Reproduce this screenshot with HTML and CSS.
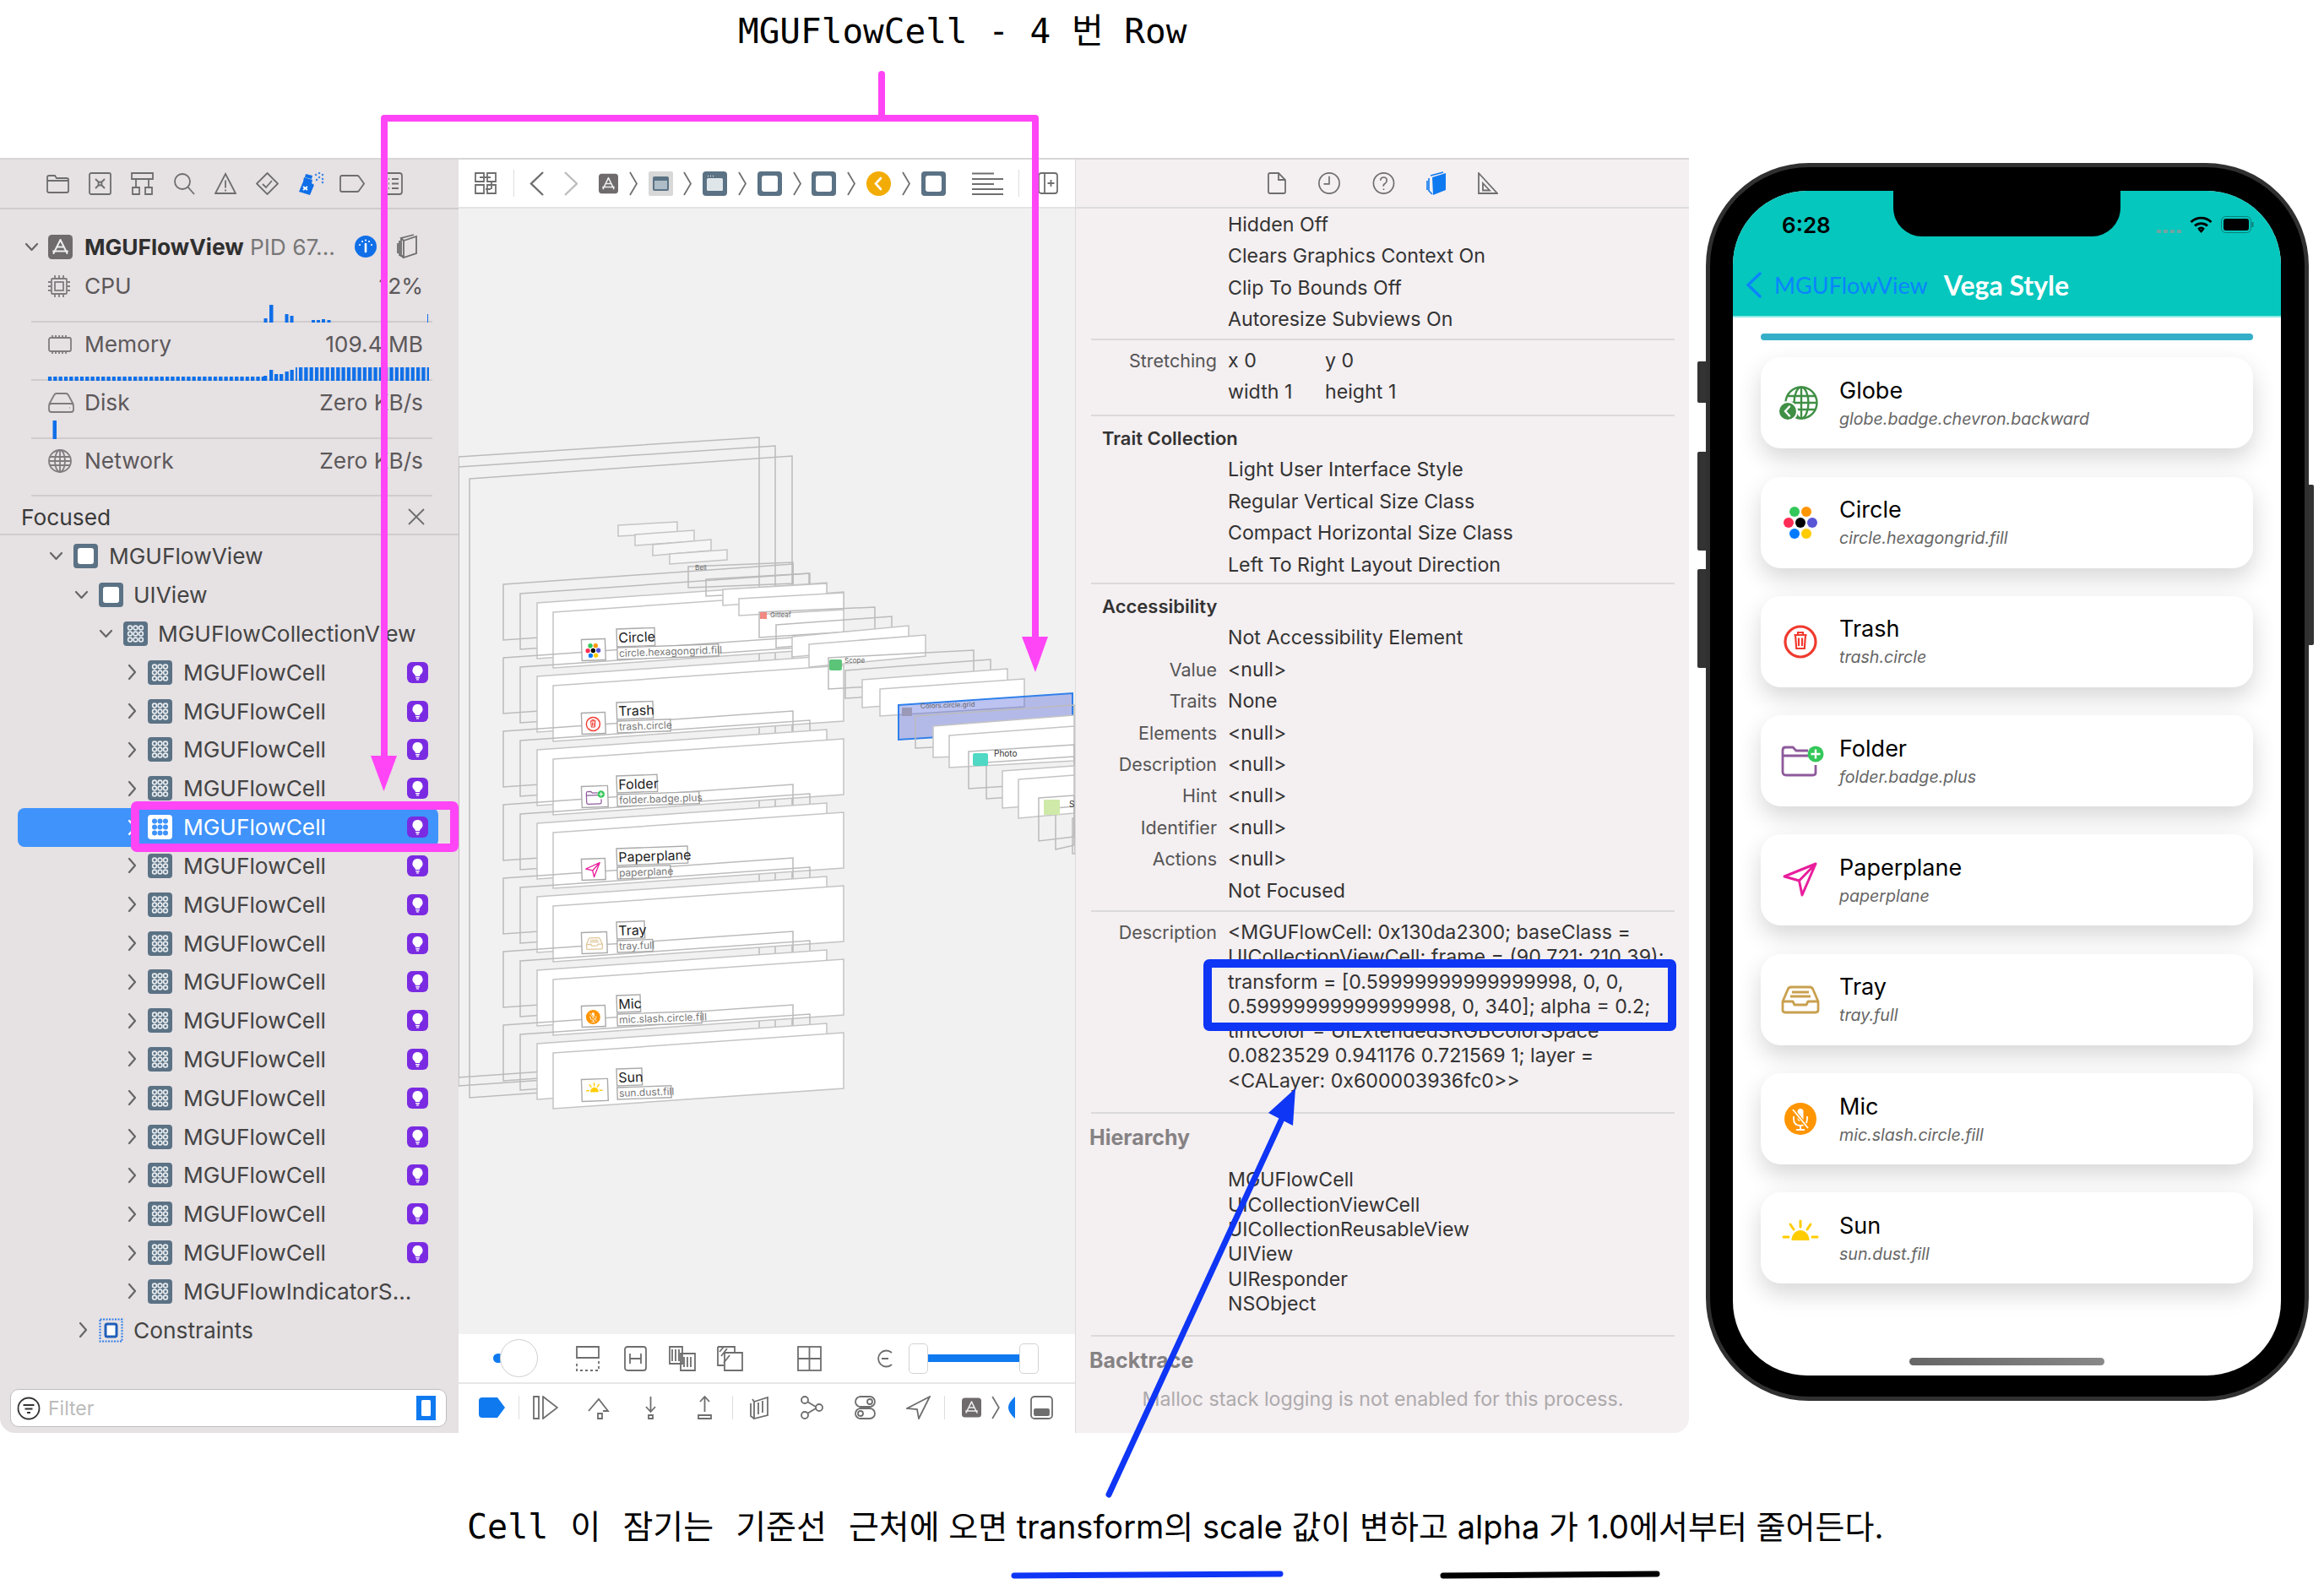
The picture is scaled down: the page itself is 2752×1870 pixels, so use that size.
FILE: index.html
```html
<!DOCTYPE html>
<html lang="ko">
  <head>
    <meta charset="UTF-8" />
    <title>MGUFlowCell - 4 번 Row</title>
    <link rel="stylesheet" href="styles.css">
  </head>

  <body>
    <!-- shared icons -->
    <svg class="defs">
      <defs>
        <symbol id="i-grid" viewBox="0 0 29 29">
          <rect width="29" height="29" rx="4" fill="#5b7285" />
          <g fill="none" stroke="#e8ecef" stroke-width="1.6">
            <circle cx="8" cy="7.5" r="2.4" /><circle cx="14.5" cy="7.5" r="2.4" /><circle cx="21" cy="7.5" r="2.4" />
            <circle cx="8" cy="14.5" r="2.4" /><circle cx="14.5" cy="14.5" r="2.4" /><circle cx="21" cy="14.5" r="2.4" />
            <circle cx="8" cy="21.5" r="2.4" /><circle cx="14.5" cy="21.5" r="2.4" /><circle cx="21" cy="21.5" r="2.4" />
          </g>
        </symbol>
        <symbol id="i-grid-on" viewBox="0 0 29 29">
          <rect width="29" height="29" rx="4" fill="#fff" />
          <g fill="#3f93fb">
            <circle cx="8" cy="7.5" r="3" /><circle cx="14.5" cy="7.5" r="3" /><circle cx="21" cy="7.5" r="3" />
            <circle cx="8" cy="14.5" r="3" /><circle cx="14.5" cy="14.5" r="3" /><circle cx="21" cy="14.5" r="3" />
            <circle cx="8" cy="21.5" r="3" /><circle cx="14.5" cy="21.5" r="3" /><circle cx="21" cy="21.5" r="3" />
          </g>
        </symbol>
        <symbol id="i-bulb" viewBox="0 0 25 25">
          <rect width="25" height="25" rx="6" fill="#7a2be2" />
          <path d="M12.5 4a6 6 0 0 0-3.6 10.8c.7.6.9 1.2 1 2.2h5.2c.1-1 .3-1.6 1-2.2A6 6 0 0 0 12.5 4z" fill="#fff" />
          <rect x="10" y="18" width="5" height="1.6" rx=".8" fill="#fff" /><rect x="10.8" y="20.2" width="3.4" height="1.4" rx=".7" fill="#fff" />
        </symbol>
        <symbol id="i-chev-r" viewBox="0 0 11 20">
          <path d="M2 2l7 8-7 8" fill="none" stroke="#666" stroke-width="2.2" stroke-linecap="round" stroke-linejoin="round" />
        </symbol>
        <symbol id="i-chev-d" viewBox="0 0 17 11">
          <path d="M2 2l6.5 7L15 2" fill="none" stroke="#666" stroke-width="2.2" stroke-linecap="round" stroke-linejoin="round" />
        </symbol>
        <symbol id="i-crumb" viewBox="0 0 10 29">
          <path d="M1 1l8 13.500L1 28" fill="none" stroke="#6f6f6f" stroke-width="1.8" />
        </symbol>
        <symbol id="i-view" viewBox="0 0 29 29">
          <rect width="29" height="29" rx="4" fill="#5b7285" /><rect x="5" y="5" width="19" height="19" rx="3" fill="#fff" />
        </symbol>
        <symbol id="i-window" viewBox="0 0 29 29">
          <rect width="29" height="29" rx="4" fill="#5b7285" /><rect x="5" y="8" width="19" height="15" rx="1.5" fill="#dfe6ea" />
          <path d="M6 5.500h1M9 5.500h1M12 5.500h1" stroke="#dfe6ea" stroke-width="1.4" />
        </symbol>
        <symbol id="i-app" viewBox="0 0 29 29">
          <rect width="29" height="29" rx="4.500" fill="#6f6b6d" />
          <path d="M14.500 6l-8 16M14.500 6l8 16M6 19.500h17M11 14.500h7.500" stroke="#eee" stroke-width="2" fill="none" stroke-linecap="round" />
        </symbol>

        <!-- phone row icons, 56 box -->
        <symbol id="p-globe" viewBox="0 0 56 56">
          <g fill="none" stroke="#3f8f45" stroke-width="2.400">
            <circle cx="29" cy="28" r="18.500" />
            <ellipse cx="29" cy="28" rx="8.500" ry="18.500" />
            <path d="M29 9.500v37M12 20h34M10.500 28h37M12 36h34" />
          </g>
          <circle cx="13" cy="38" r="12" fill="#fff" /><circle cx="13" cy="38" r="10" fill="#3f8f45" />
          <path d="M15 32.500L10 38l5 5.500" fill="none" stroke="#fff" stroke-width="2.400" stroke-linecap="round" />
        </symbol>
        <symbol id="p-hex" viewBox="0 0 56 56">
          <circle cx="21" cy="15" r="6" fill="#34c759" /><circle cx="35" cy="15" r="6" fill="#ff9500" />
          <circle cx="14" cy="28" r="6" fill="#ff2d55" /><circle cx="28" cy="28" r="6" fill="#000" /><circle cx="42" cy="28" r="6" fill="#5856d6" />
          <circle cx="21" cy="41" r="6" fill="#007aff" /><circle cx="35" cy="41" r="6" fill="#ffcc00" />
        </symbol>
        <symbol id="p-trash" viewBox="0 0 56 56">
          <circle cx="28" cy="28" r="18" fill="none" stroke="#f03a2e" stroke-width="3.200" />
          <path d="M20.500 20h15M25 20v-3h6v3M22 20l1.200 16h9.600L34 20M26 23.500v9.500M30 23.500v9.500" fill="none" stroke="#f03a2e" stroke-width="2.200" />
        </symbol>
        <symbol id="p-folder" viewBox="0 0 56 56">
          <path d="M7 22v19q0 4 4 4h32q3 0 3-3V33M7 22v-6q0-4 3-4h9l4 4h14M7 22h30" fill="none" stroke="#8e5a9b" stroke-width="2.800" />
          <circle cx="46" cy="20" r="9.500" fill="#34c759" />
          <path d="M46 14.500v11M40.500 20h11" stroke="#fff" stroke-width="2.400" />
        </symbol>
        <symbol id="p-plane" viewBox="0 0 56 56">
          <path d="M46 9L9 24l17.500 5L30 46zM46 9L26.500 29" fill="none" stroke="#e91e9c" stroke-width="3" stroke-linejoin="round" />
        </symbol>
        <symbol id="p-tray" viewBox="0 0 56 56">
          <path d="M7 30l6-14q1-3 4-3h22q3 0 4 3l6 14v10q0 3-3 3H10q-3 0-3-3zM7 30h12l2 4h14l2-4h12M18 19h20M16 24h24" fill="none" stroke="#c9a04f" stroke-width="2.800" stroke-linejoin="round" />
        </symbol>
        <symbol id="p-mic" viewBox="0 0 56 56">
          <circle cx="28" cy="28" r="19" fill="#ff9500" />
          <rect x="24.500" y="16" width="7" height="15" rx="3.500" fill="#fff" />
          <path d="M20 25v3q0 8 8 8t8-8v-3M28 36v4M23 41h10" fill="none" stroke="#fff" stroke-width="1.800" />
          <path d="M19 17l18 22" stroke="#ff9500" stroke-width="4" /><path d="M19 17l18 22" stroke="#fff" stroke-width="1.800" />
        </symbol>
        <symbol id="p-sun" viewBox="0 0 56 56">
          <path d="M17.500 31a10.500 12 0 0 1 21 0z" fill="#ffcc00" />
          <path d="M28 8v7M16 12l4 6M40 12l-4 6M8 27h6M42 27h6" stroke="#ffcc00" stroke-width="3" stroke-linecap="round" />
        </symbol>

        <!-- one cell in the view debugger, four stacked layers -->
        <g id="cell3d">
          <polygon class="wire" points="596,691 939,667 939,733 596,757" />
          <polygon class="wire" points="616,702 959,678 959,744 616,768" />
          <polygon class="sheet" points="636,713 979,689 979,755 636,779" />
          <polygon class="sheet" points="655,724 999,700 999,766 655,790" />
        </g>
      </defs>
    </svg>

    <h1 class="heading">MGUFlowCell - 4 <span class="heading-ko">번</span> Row</h1>

    <div class="stage">
      <div class="xcode">
        <!-- navigator -->
        <aside class="nav-pane">
          <div class="nav-tabs">
            <svg width="27" height="27" viewBox="0 0 27 27" class="ico"><path d="M1 6q0-2 2-2h7l2 3h12q2 0 2 2v13q0 2-2 2H3q-2 0-2-2zM1 10h25" /></svg>
            <svg width="27" height="27" viewBox="0 0 27 27" class="ico"><rect x="1" y="1" width="25" height="25" rx="2" /><path d="M8 8l4 4M19 8l-4 4M8 19l4-4M19 19l-4-4" /><circle cx="13.500" cy="13.500" r="2" /></svg>
            <svg width="27" height="27" viewBox="0 0 27 27" class="ico"><path d="M1 1h25v7H1zM6 8v9M21 8v9M2 18h8v8H2zM17 18h8v8h-8z" /></svg>
            <svg width="26" height="27" viewBox="0 0 26 27" class="ico"><circle cx="11" cy="11" r="9" /><path d="M17.500 17.500L25 26" /></svg>
            <svg width="26" height="27" viewBox="0 0 26 27" class="ico"><path d="M13 2l12 23H1zM13 9.500v9M13 20.500v2" /></svg>
            <svg width="27" height="27" viewBox="0 0 27 27" class="ico"><path d="M13.500 1L26 13.500 13.500 26 1 13.500zM8 14l4 4 7-8" /></svg>
            <svg width="31" height="27" viewBox="0 0 31 27" class="tab-spray"><path d="M7 6l10 3-1 4 3 2-5 12-13-4L6 11z" fill="#0f6fe8" /><path d="M9 2l8 2-1 4-8-2z" fill="#0f6fe8" /><path d="M6 17l5 4M11 17l-5 4" stroke="#fff" stroke-width="1.800" /><path d="M21 3h.1M25 1h.1M29 3h.1M25 6h.1M29 8h.1M22 9h.1M29 12h.1" stroke="#3f88e6" stroke-width="2.400" stroke-linecap="round" /></svg>
            <svg width="30" height="27" viewBox="0 0 30 27" class="ico"><path d="M3 4h18q1 0 2 1l6 8.500-6 8.500q-1 1-2 1H3q-2 0-2-2V6q0-2 2-2z" /></svg>
            <svg width="22" height="27" viewBox="0 0 22 27" class="ico"><rect x="1" y="1" width="20" height="25" rx="3" /><path d="M5 8h1M5 13.500h1M5 19h1M9 8h8M9 13.500h8M9 19h8" /></svg>
          </div>

          <div class="process">
            <svg class="chev-d" width="17" height="11"><use href="#i-chev-d" /></svg>
            <svg width="29" height="29"><use href="#i-app" /></svg>
            <span class="process-name"><b>MGUFlowView</b> PID 67...</span>
            <svg class="gauge" width="26" height="28" viewBox="0 0 26 28"><circle cx="13" cy="14" r="13" fill="#0f6fe8" /><path d="M13 11v9" stroke="#fff" stroke-width="2.600" stroke-linecap="round" /><path d="M6 12h.1M9 8h.1M13 6.500h.1M17 8h.1M20 12h.1" stroke="#fff" stroke-width="2" stroke-linecap="round" /></svg>
            <svg class="ico stack-ico" width="24" height="30" viewBox="0 0 24 30"><path d="M8 8l15-5v20L8 28zM8 8L5 5l15-4M5 5v20l3 3M3 8v17l5 3M1 11v12" /></svg>
          </div>

          <div class="metric metric-first">
            <div class="metric-row">
              <svg class="ico" width="26" height="28" viewBox="0 0 26 28"><rect x="4" y="5" width="18" height="18" rx="1" /><rect x="8" y="9" width="10" height="10" /><path d="M8 1v3M13 1v3M18 1v3M8 24v3M13 24v3M18 24v3M0 9h3M0 14h3M0 19h3M23 9h3M23 14h3M23 19h3" /></svg>
              <span>CPU</span><span class="metric-val">12%</span>
            </div>
            <svg class="spark" width="543" height="17" viewBox="0 0 543 17">
              <rect x="312.500" y="12" width="4" height="5" /><rect x="319" y="-4" width="4.500" height="21" />
              <rect x="337.500" y="7" width="4" height="10" /><rect x="343.500" y="9" width="4" height="8" />
              <rect x="369" y="14" width="4" height="3" /><rect x="375" y="14" width="4" height="3" />
              <rect x="381" y="13" width="4" height="4" /><rect x="387.500" y="14" width="4" height="3" />
              <rect x="506" y="7" width="1" height="10" />
            </svg>
          </div>
          <div class="metric">
            <div class="metric-row">
              <svg class="ico" width="28" height="24" viewBox="0 0 28 24"><rect x="1" y="4" width="26" height="16" rx="2" /><path d="M5 1v2M9 1v2M13 1v2M17 1v2M21 1v2M5 21v2M9 21v2M13 21v2M17 21v2M21 21v2" /></svg>
              <span>Memory</span><span class="metric-val">109.4 MB</span>
            </div>
            <svg class="spark" width="543" height="15" viewBox="0 0 543 15">
              <defs>
                <pattern id="lowbar" width="6.320" height="20" patternUnits="userSpaceOnUse"><rect width="4.300" height="20" /></pattern>
              </defs>
              <rect x="56" y="10" width="256" height="5" fill="url(#lowbar)" />
              <rect x="312" y="9" width="4.300" height="6" /><rect x="319" y="2" width="4.300" height="13" />
              <rect x="325" y="7" width="4.300" height="8" /><rect x="331" y="7" width="4.300" height="8" />
              <rect x="337.500" y="4" width="4.300" height="11" /><rect x="343.500" y="2" width="4.300" height="13" />
              <rect x="350" y="-1" width="158" height="16" fill="url(#lowbar)" />
            </svg>
          </div>
          <div class="metric">
            <div class="metric-row">
              <svg class="ico" width="31" height="24" viewBox="0 0 31 24"><path d="M1 14l6-11q1-2 3-2h11q2 0 3 2l6 11M4 13h23q3 0 3 3v4q0 3-3 3H4q-3 0-3-3v-4q0-3 3-3zM25 18h.5" /></svg>
              <span>Disk</span><span class="metric-val">Zero KB/s</span>
            </div>
            <svg class="spark" width="543" height="15" viewBox="0 0 543 15"><rect x="62.500" y="-7" width="4.500" height="22" /></svg>
          </div>
          <div class="metric metric-last">
            <div class="metric-row">
              <svg class="ico" width="28" height="28" viewBox="0 0 28 28"><circle cx="14" cy="14" r="13" /><ellipse cx="14" cy="14" rx="6" ry="13" /><path d="M14 1v26M2 9h24M1 14h26M2 19h24" /></svg>
              <span>Network</span><span class="metric-val">Zero KB/s</span>
            </div>
          </div>

          <div class="focused"><span>Focused</span><svg class="ico" width="20" height="20" viewBox="0 0 20 20"><path d="M1 1l18 18M19 1L1 19" /></svg></div>

          <ul class="tree">
            <li class="tree-row lv0"><svg class="chev chev-d" width="17" height="11"><use href="#i-chev-d" /></svg><svg class="node" width="29" height="29"><use href="#i-view" /></svg><span>MGUFlowView</span></li>
            <li class="tree-row lv1"><svg class="chev chev-d" width="17" height="11"><use href="#i-chev-d" /></svg><svg class="node" width="29" height="29"><use href="#i-view" /></svg><span>UIView</span></li>
            <li class="tree-row lv2"><svg class="chev chev-d" width="17" height="11"><use href="#i-chev-d" /></svg><svg class="node" width="29" height="29"><use href="#i-grid" /></svg><span>MGUFlowCollectionView</span></li>
            <li class="tree-row lv3"><svg class="chev" width="11" height="20"><use href="#i-chev-r" /></svg><svg class="node" width="29" height="29"><use href="#i-grid" /></svg><span>MGUFlowCell</span><svg class="badge" width="25" height="25"><use href="#i-bulb" /></svg></li>
            <li class="tree-row lv3"><svg class="chev" width="11" height="20"><use href="#i-chev-r" /></svg><svg class="node" width="29" height="29"><use href="#i-grid" /></svg><span>MGUFlowCell</span><svg class="badge" width="25" height="25"><use href="#i-bulb" /></svg></li>
            <li class="tree-row lv3"><svg class="chev" width="11" height="20"><use href="#i-chev-r" /></svg><svg class="node" width="29" height="29"><use href="#i-grid" /></svg><span>MGUFlowCell</span><svg class="badge" width="25" height="25"><use href="#i-bulb" /></svg></li>
            <li class="tree-row lv3"><svg class="chev" width="11" height="20"><use href="#i-chev-r" /></svg><svg class="node" width="29" height="29"><use href="#i-grid" /></svg><span>MGUFlowCell</span><svg class="badge" width="25" height="25"><use href="#i-bulb" /></svg></li>
            <li class="tree-row lv3 selected"><svg class="chev" width="11" height="20"><use href="#i-chev-r" /></svg><svg class="node" width="29" height="29"><use href="#i-grid-on" /></svg><span>MGUFlowCell</span><svg class="badge" width="25" height="25"><use href="#i-bulb" /></svg></li>
            <li class="tree-row lv3"><svg class="chev" width="11" height="20"><use href="#i-chev-r" /></svg><svg class="node" width="29" height="29"><use href="#i-grid" /></svg><span>MGUFlowCell</span><svg class="badge" width="25" height="25"><use href="#i-bulb" /></svg></li>
            <li class="tree-row lv3"><svg class="chev" width="11" height="20"><use href="#i-chev-r" /></svg><svg class="node" width="29" height="29"><use href="#i-grid" /></svg><span>MGUFlowCell</span><svg class="badge" width="25" height="25"><use href="#i-bulb" /></svg></li>
            <li class="tree-row lv3"><svg class="chev" width="11" height="20"><use href="#i-chev-r" /></svg><svg class="node" width="29" height="29"><use href="#i-grid" /></svg><span>MGUFlowCell</span><svg class="badge" width="25" height="25"><use href="#i-bulb" /></svg></li>
            <li class="tree-row lv3"><svg class="chev" width="11" height="20"><use href="#i-chev-r" /></svg><svg class="node" width="29" height="29"><use href="#i-grid" /></svg><span>MGUFlowCell</span><svg class="badge" width="25" height="25"><use href="#i-bulb" /></svg></li>
            <li class="tree-row lv3"><svg class="chev" width="11" height="20"><use href="#i-chev-r" /></svg><svg class="node" width="29" height="29"><use href="#i-grid" /></svg><span>MGUFlowCell</span><svg class="badge" width="25" height="25"><use href="#i-bulb" /></svg></li>
            <li class="tree-row lv3"><svg class="chev" width="11" height="20"><use href="#i-chev-r" /></svg><svg class="node" width="29" height="29"><use href="#i-grid" /></svg><span>MGUFlowCell</span><svg class="badge" width="25" height="25"><use href="#i-bulb" /></svg></li>
            <li class="tree-row lv3"><svg class="chev" width="11" height="20"><use href="#i-chev-r" /></svg><svg class="node" width="29" height="29"><use href="#i-grid" /></svg><span>MGUFlowCell</span><svg class="badge" width="25" height="25"><use href="#i-bulb" /></svg></li>
            <li class="tree-row lv3"><svg class="chev" width="11" height="20"><use href="#i-chev-r" /></svg><svg class="node" width="29" height="29"><use href="#i-grid" /></svg><span>MGUFlowCell</span><svg class="badge" width="25" height="25"><use href="#i-bulb" /></svg></li>
            <li class="tree-row lv3"><svg class="chev" width="11" height="20"><use href="#i-chev-r" /></svg><svg class="node" width="29" height="29"><use href="#i-grid" /></svg><span>MGUFlowCell</span><svg class="badge" width="25" height="25"><use href="#i-bulb" /></svg></li>
            <li class="tree-row lv3"><svg class="chev" width="11" height="20"><use href="#i-chev-r" /></svg><svg class="node" width="29" height="29"><use href="#i-grid" /></svg><span>MGUFlowCell</span><svg class="badge" width="25" height="25"><use href="#i-bulb" /></svg></li>
            <li class="tree-row lv3"><svg class="chev" width="11" height="20"><use href="#i-chev-r" /></svg><svg class="node" width="29" height="29"><use href="#i-grid" /></svg><span>MGUFlowCell</span><svg class="badge" width="25" height="25"><use href="#i-bulb" /></svg></li>
            <li class="tree-row lv3"><svg class="chev" width="11" height="20"><use href="#i-chev-r" /></svg><svg class="node" width="29" height="29"><use href="#i-grid" /></svg><span>MGUFlowIndicatorS...</span></li>
            <li class="tree-row lv1"><svg class="chev" width="11" height="20"><use href="#i-chev-r" /></svg><svg class="node" width="29" height="29" viewBox="0 0 29 29"><rect x="1.500" y="1.500" width="26" height="26" fill="none" stroke="#2f7fe8" stroke-width="2" stroke-dasharray="2 1.500" /><rect x="8" y="7" width="13" height="15" rx="2" fill="#fff" stroke="#1f5fb8" stroke-width="3" /></svg><span>Constraints</span></li>
          </ul>

          <div class="filter">
            <svg width="28" height="28" viewBox="0 0 28 28"><circle cx="14" cy="14" r="12.500" fill="none" stroke="#333" stroke-width="1.800" /><path d="M7.500 10h13M9.500 14.500h9M12 19h4" stroke="#333" stroke-width="2" /></svg>
            <span class="filter-hint">Filter</span>
            <svg class="filter-mode" width="23" height="29" viewBox="0 0 23 29"><rect width="23" height="29" fill="#0f7af0" /><rect x="6" y="5" width="11" height="19" rx="1.500" fill="#fff" /></svg>
          </div>
        </aside>

        <!-- debugger canvas -->
        <main class="canvas-pane">
          <div class="jump-bar">
            <svg class="ico" width="26" height="26" viewBox="0 0 26 26"><path d="M1 1h10v10H1zM15 1h10v10H15zM1 15h10v10H1zM15 15h10v10H15zM6 6h13M13 20h6M20 11v9" /></svg>
            <i class="bar-sep"></i>
            <svg class="ico" width="17" height="29" viewBox="0 0 17 29"><path d="M16 1L2 14.500 16 28" stroke-width="2.400" /></svg>
            <svg class="ico fwd" width="16" height="29" viewBox="0 0 16 29"><path d="M1 1l14 13.500L1 28" stroke="#bdbdbd" stroke-width="2.400" /></svg>
            <div class="crumbs">
              <svg width="23" height="29" viewBox="0 0 29 36" preserveAspectRatio="none"><use href="#i-app" width="29" height="36" /></svg>
              <svg width="10" height="29"><use href="#i-crumb" /></svg>
              <svg width="29" height="29" viewBox="0 0 29 29"><rect width="29" height="29" rx="2" fill="#d8d8d8" /><rect x="5" y="6" width="19" height="17" rx="2" fill="#5b7285" /><rect x="7" y="11" width="15" height="10" fill="#aebdc7" /></svg>
              <svg width="10" height="29"><use href="#i-crumb" /></svg>
              <svg width="29" height="29"><use href="#i-window" /></svg>
              <svg width="10" height="29"><use href="#i-crumb" /></svg>
              <svg width="29" height="29"><use href="#i-view" /></svg>
              <svg width="10" height="29"><use href="#i-crumb" /></svg>
              <svg width="29" height="29"><use href="#i-view" /></svg>
              <svg width="10" height="29"><use href="#i-crumb" /></svg>
              <svg width="29" height="29" viewBox="0 0 29 29"><circle cx="14.500" cy="14.500" r="14.500" fill="#f2ac05" /><path d="M17 8l-6 6.500 6 6.500" fill="none" stroke="#fff" stroke-width="2.600" stroke-linecap="round" /></svg>
              <svg width="10" height="29"><use href="#i-crumb" /></svg>
              <svg width="29" height="29"><use href="#i-view" /></svg>
            </div>
            <svg class="ico lines" width="37" height="27" viewBox="0 0 37 27"><path d="M0 1.500h26M0 8h37M0 14h26M0 20h37M0 26h37" /></svg>
            <i class="bar-sep bar-sep-end"></i>
            <svg class="ico" width="24" height="26" viewBox="0 0 24 26"><rect x="1" y="1" width="22" height="24" rx="3" /><path d="M8 1v24M15.500 9v8M11.500 13h8" /></svg>
          </div>

          <div class="canvas">
            <svg width="730" height="1334" viewBox="543 246 730 1334">
              <!-- collection view frames behind everything -->
              <polygon class="wire" points="543,540 899,517 899,1250 543,1275" />
              <polygon class="wire" points="543,552 918,527 918,1259 543,1285" />
              <polygon class="wire" points="556,566 938,539 938,1272 556,1299" />

              <!-- header bars -->
              <polygon class="sheet thin" points="732,621 802,617 802,630 732,634" />
              <polygon class="sheet thin" points="752,632 822,627 822,640 752,645" />
              <polygon class="sheet thin" points="773,644 842,638 842,651 773,657" />
              <polygon class="sheet thin" points="793,655 861,650 861,662 793,667" />

              <use href="#cell3d" />
              <use href="#cell3d" y="87" />
              <use href="#cell3d" y="174" />
              <use href="#cell3d" y="261" />
              <use href="#cell3d" y="348" />
              <use href="#cell3d" y="435" />
              <use href="#cell3d" y="522" />

              <g class="row3d" transform="translate(730 744) rotate(-2)">
                <rect class="tag" width="45" height="21" /><text x="2" y="16">Circle</text>
                <rect class="tag" y="22" width="120" height="14" /><text class="sub" x="2" y="33">circle.hexagongrid.fill</text>
                <rect class="tag" x="-42" y="11" width="28" height="25" /><use href="#p-hex" x="-41" y="12" width="25" height="25" />
              </g>
              <g class="row3d" transform="translate(730 831) rotate(-2)">
                <rect class="tag" width="43" height="20" /><text x="2" y="16">Trash</text>
                <rect class="tag" y="22" width="63" height="14" /><text class="sub" x="2" y="33">trash.circle</text>
                <rect class="tag" x="-42" y="11" width="28" height="25" /><use href="#p-trash" x="-41" y="12" width="25" height="25" />
              </g>
              <g class="row3d" transform="translate(730 918) rotate(-2)">
                <rect class="tag" width="48" height="20" /><text x="2" y="16">Folder</text>
                <rect class="tag" y="22" width="97" height="14" /><text class="sub" x="2" y="33">folder.badge.plus</text>
                <rect class="tag" x="-42" y="11" width="31" height="25" /><use href="#p-folder" x="-41" y="12" width="28" height="25" />
              </g>
              <g class="row3d" transform="translate(730 1004) rotate(-2)">
                <rect class="tag" width="84" height="20" /><text x="2" y="16">Paperplane</text>
                <rect class="tag" y="22" width="63" height="14" /><text class="sub" x="2" y="33">paperplane</text>
                <rect class="tag" x="-42" y="11" width="28" height="25" /><use href="#p-plane" x="-41" y="12" width="25" height="25" />
              </g>
              <g class="row3d" transform="translate(730 1091) rotate(-2)">
                <rect class="tag" width="33" height="20" /><text x="2" y="16">Tray</text>
                <rect class="tag" y="22" width="42" height="14" /><text class="sub" x="2" y="33">tray.full</text>
                <rect class="tag" x="-42" y="11" width="30" height="25" /><use href="#p-tray" x="-41" y="12" width="28" height="25" opacity=".6" />
              </g>
              <g class="row3d" transform="translate(730 1178) rotate(-2)">
                <rect class="tag" width="28" height="20" /><text x="2" y="16">Mic</text>
                <rect class="tag" y="22" width="100" height="14" /><text class="sub" x="2" y="33">mic.slash.circle.fill</text>
                <rect class="tag" x="-42" y="11" width="28" height="25" /><use href="#p-mic" x="-41" y="12" width="25" height="25" />
              </g>
              <g class="row3d" transform="translate(730 1265) rotate(-2)">
                <rect class="tag" width="30" height="20" /><text x="2" y="16">Sun</text>
                <rect class="tag" y="22" width="64" height="14" /><text class="sub" x="2" y="33">sun.dust.fill</text>
                <rect class="tag" x="-42" y="11" width="31" height="26" /><use href="#p-sun" x="-41" y="12" width="28" height="26" />
              </g>

              <!-- cells on the way out, shrinking -->
              <polygon class="wire" points="815,670 939,665 939,690 815,695" />
              <polygon class="wire" points="836,685 958,678 958,699 836,705" />
              <polygon class="sheet" points="856,697 979,690 979,708 856,716" />
              <polygon class="sheet" points="875,708 999,701 999,721 875,728" />
              <text class="tiny" x="823" y="674">Bell</text>

              <polygon class="wire" points="899,724 1036,718 1036,745 899,754" />
              <polygon class="wire" points="919,739 1056,729 1056,755 919,766" />
              <polygon class="sheet" points="938,753 1076,740 1076,765 938,777" />
              <polygon class="sheet" points="958,762 1096,751 1096,776 958,789" />
              <rect x="900" y="724" width="8" height="8" fill="#f08a82" /><text class="tiny" x="912" y="730">Gitleaf</text>

              <polygon class="wire" points="981,778 1153,769 1153,805 981,815" />
              <polygon class="wire" points="1001,793 1173,780 1173,815 1001,826" />
              <polygon class="sheet" points="1021,804 1193,791 1193,824 1021,837" />
              <polygon class="sheet" points="1042,815 1213,803 1213,836 1042,847" />
              <rect x="982" y="780" width="15" height="13" rx="2" fill="#5cc478" /><text class="tiny" x="1000" y="784">Scope</text>

              <polygon class="picked" points="1064,834 1270,820 1270,862 1064,875" />
              <polygon class="wire" points="1084,847 1272,834 1272,876 1084,885" />
              <polygon class="sheet" points="1105,859 1272,846 1272,890 1105,896" />
              <polygon class="sheet" points="1124,870 1272,859 1272,900 1124,908" />
              <rect x="1068" y="837" width="12" height="10" fill="#9a9ab8" /><text class="tiny" transform="rotate(-2 1090 836)" x="1090" y="838" fill="#2a3a9a">Colors.circle.grid</text>

              <polygon class="wire" points="1147,889 1272,881 1272,925 1147,933" />
              <polygon class="wire" points="1168,902 1272,895 1272,938 1168,945" />
              <polygon class="sheet" points="1187,912 1272,906 1272,950 1187,956" />
              <polygon class="sheet" points="1206,922 1272,917 1272,962 1206,968" />
              <rect x="1152" y="891" width="18" height="15" rx="2" fill="#4fd8c4" /><text class="tiny big" x="1177" y="895">Photo</text>

              <polygon class="wire" points="1230,944 1272,941 1272,990 1230,995" />
              <polygon class="wire" points="1250,956 1272,954 1272,1000 1250,1005" />
              <polygon class="wire" points="1270,968 1273,968 1273,1010 1270,1010" />
              <rect x="1236" y="946" width="19" height="18" fill="#cfeaa8" /><text class="tiny big" x="1266" y="955">S</text>
            </svg>
          </div>

          <div class="debug-bar debug-top">
            <div class="zoom-knob"><i class="zoom-dot"></i><i class="zoom-circle"></i></div>
            <svg class="ico" width="28" height="30" viewBox="0 0 28 30"><path d="M1 1h26v13H1zM1 18v11h26V18" /><path d="M1 18v11h26V18" stroke-dasharray="3 3" stroke="#fff" /></svg>
            <svg class="ico" width="27" height="30" viewBox="0 0 27 30"><rect x="1" y="1" width="25" height="28" rx="3" /><path d="M7 9v12M20 9v12M7 15h13" /></svg>
            <svg class="ico" width="32" height="30" viewBox="0 0 32 30"><path d="M1 1h15v20H1zM4 4v14M8 4v14M12 4v14M14 9h17v20H14zM18 13v12M22 13v12M26 13v12" /></svg>
            <svg class="ico" width="31" height="30" viewBox="0 0 31 30"><path d="M1 1h20v7M1 1v22h7M5 12L12 3M3 7l5-6M8 20l7-9M9 8h21v21H9z" /></svg>
            <svg class="ico" width="29" height="30" viewBox="0 0 29 30"><rect x="1" y="1" width="27" height="28" /><path d="M14.500 1v28M1 15h27" /></svg>
            <svg class="ico" width="20" height="22" viewBox="0 0 20 22"><path d="M18 4a9.500 9.500 0 1 0 0 14M6 11h8" /></svg>
            <div class="depth">
              <i class="depth-handle"></i><i class="depth-fill"></i><i class="depth-handle"></i>
            </div>
          </div>
          <div class="debug-bar debug-low">
            <svg width="31" height="24" viewBox="0 0 31 24"><path d="M4 0h18l9 12-9 12H4q-4 0-4-4V4q0-4 4-4z" fill="#0f7af0" /></svg>
            <i class="low-sep"></i>
            <svg class="ico" width="30" height="28" viewBox="0 0 30 28"><path d="M1 1h6v26H1zM12 1l17 13L12 27z" /></svg>
            <svg class="ico" width="28" height="28" viewBox="0 0 28 28"><path d="M1 18L13 4l11 14h-6M12 21h5v6h-5z" /></svg>
            <svg class="ico" width="23" height="28" viewBox="0 0 23 28"><path d="M11.500 1v18M6 13l5.500 6 5.500-6M9 23h5v4H9z" /></svg>
            <svg class="ico" width="21" height="28" viewBox="0 0 21 28"><path d="M10.500 19V1M5 7l5.500-6L16 7M3 23h15v4H3z" /></svg>
            <i class="low-sep"></i>
            <svg class="ico" width="23" height="28" viewBox="0 0 23 28"><path d="M6 7l16-5v21L6 27zM6 7L4 4M2 9v15l4 3M11 8v14M16 6v14" /></svg>
            <svg class="ico" width="28" height="28" viewBox="0 0 28 28"><circle cx="6" cy="5" r="4" /><circle cx="23" cy="14" r="4" /><circle cx="6" cy="23" r="4" /><path d="M9 7l10 6M9 21l10-6" /></svg>
            <svg class="ico" width="25" height="28" viewBox="0 0 25 28"><rect x="1" y="1" width="23" height="12" rx="6" /><rect x="1" y="15" width="23" height="12" rx="6" /><circle cx="18" cy="7" r="3" /><circle cx="7" cy="21" r="3" /></svg>
            <svg class="ico" width="29" height="28" viewBox="0 0 29 28"><path d="M28 1L1 15l12 1 2 11z" /></svg>
            <i class="low-sep"></i>
            <svg width="23" height="28" viewBox="0 0 29 35" preserveAspectRatio="none"><use href="#i-app" width="29" height="35" /></svg>
            <svg width="10" height="28"><use href="#i-crumb" /></svg>
            <svg width="8" height="28" viewBox="0 0 8 28"><path d="M8 1Q0 8 0 14t8 13z" fill="#0f7af0" /></svg>
            <svg class="ico" width="27" height="28" viewBox="0 0 27 28"><rect x="1" y="1" width="25" height="26" rx="4" /><rect x="5" y="16" width="17" height="7" rx="1" fill="#6e6e6e" /></svg>
          </div>
        </main>

        <!-- inspector -->
        <aside class="inspector">
          <div class="insp-tabs">
            <svg class="ico" width="22" height="26" viewBox="0 0 22 26"><path d="M1 3q0-2 2-2h10l8 8v14q0 2-2 2H3q-2 0-2-2zM13 1v8h8" /></svg>
            <svg class="ico" width="28" height="26" viewBox="0 0 28 28"><circle cx="14" cy="14" r="13" /><path d="M14 5v10H7" /></svg>
            <svg class="ico" width="27" height="26" viewBox="0 0 28 28"><circle cx="14" cy="14" r="13" /><path d="M10 10.500q0-4 4-4t4 4q0 2.500-2.500 4t-1.500 3.500M14 21v1.500" /></svg>
            <svg width="24" height="29" viewBox="0 0 24 29"><path d="M7 7l16-5v20L8 28z" fill="#0f7af0" /><path d="M5 5l15-4M3 8v15l4 4M1 11v11" fill="none" stroke="#0f7af0" stroke-width="1.600" /></svg>
            <svg class="ico" width="24" height="26" viewBox="0 0 24 26"><path d="M1 1l22 24H1zM6 13l8 8.500H6z" /></svg>
          </div>

          <div class="group group-a">
            <p class="row"><span></span><span>Hidden Off</span></p>
            <p class="row"><span></span><span>Clears Graphics Context On</span></p>
            <p class="row"><span></span><span>Clip To Bounds Off</span></p>
            <p class="row"><span></span><span>Autoresize Subviews On</span></p>
          </div>
          <div class="group group-b">
            <p class="row"><span class="key">Stretching</span><span class="pair"><span>x 0</span><span>y 0</span></span></p>
            <p class="row"><span></span><span class="pair"><span>width 1</span><span>height 1</span></span></p>
          </div>
          <div class="group group-c">
            <h3 class="sect">Trait Collection</h3>
            <p class="row"><span></span><span>Light User Interface Style</span></p>
            <p class="row"><span></span><span>Regular Vertical Size Class</span></p>
            <p class="row"><span></span><span>Compact Horizontal Size Class</span></p>
            <p class="row"><span></span><span>Left To Right Layout Direction</span></p>
          </div>
          <div class="group group-c group-d">
            <h3 class="sect">Accessibility</h3>
            <p class="row"><span></span><span>Not Accessibility Element</span></p>
            <p class="row"><span class="key">Value</span><span>&lt;null&gt;</span></p>
            <p class="row"><span class="key">Traits</span><span>None</span></p>
            <p class="row"><span class="key">Elements</span><span>&lt;null&gt;</span></p>
            <p class="row"><span class="key">Description</span><span>&lt;null&gt;</span></p>
            <p class="row"><span class="key">Hint</span><span>&lt;null&gt;</span></p>
            <p class="row"><span class="key">Identifier</span><span>&lt;null&gt;</span></p>
            <p class="row"><span class="key">Actions</span><span>&lt;null&gt;</span></p>
            <p class="row"><span></span><span>Not Focused</span></p>
          </div>
          <div class="group group-e">
            <p class="row tight"><span class="key">Description</span><span>&lt;MGUFlowCell: 0x130da2300; baseClass =<br>UICollectionViewCell; frame = (90 721; 210 39);<br>transform = [0.59999999999999998, 0, 0,<br>0.59999999999999998, 0, 340]; alpha = 0.2;<br>tintColor = UIExtendedSRGBColorSpace<br>0.0823529 0.941176 0.721569 1; layer =<br>&lt;CALayer: 0x600003936fc0&gt;&gt;</span></p>
          </div>
          <div class="group group-f">
            <h3 class="sect faded">Hierarchy</h3>
            <p class="row tight"><span></span><span>MGUFlowCell<br>UICollectionViewCell<br>UICollectionReusableView<br>UIView<br>UIResponder<br>NSObject</span></p>
          </div>
          <div class="group group-g">
            <h3 class="sect faded">Backtrace</h3>
            <p class="malloc">Malloc stack logging is not enabled for this process.</p>
          </div>
        </aside>
      </div>

      <!-- simulator -->
      <div class="phone">
        <i class="hw hw-a"></i><i class="hw hw-b"></i><i class="hw hw-c"></i><i class="hw hw-d"></i>
        <div class="screen">
          <i class="notch"></i>
          <header class="app-bar">
            <div class="status">
              <span class="time">6:28</span>
              <div class="status-icons">
                <i class="signal"></i>
                <svg width="27" height="20" viewBox="0 0 27 20"><path d="M1.500 7a17 17 0 0 1 24 0M6 11.500a11 11 0 0 1 15 0M10 15.500a5.500 5.500 0 0 1 7 0" fill="none" stroke="#000" stroke-width="2.800" /><path d="M13.500 20l-3.500-4h7z" /></svg>
                <svg width="40" height="20" viewBox="0 0 40 20"><rect x=".5" y=".5" width="35" height="19" rx="5" fill="none" stroke="#0a7f7a" /><rect x="3" y="3" width="30" height="14" rx="3" /><path d="M37.500 7v6" stroke="#0a7f7a" stroke-width="2" /></svg>
              </div>
            </div>
            <div class="title-bar">
              <svg width="20" height="31" viewBox="0 0 20 31"><path d="M17 2L3 15.500 17 29" fill="none" stroke="#0a84ff" stroke-width="3.400" stroke-linecap="round" /></svg>
              <span class="back">MGUFlowView</span>
              <span class="title">Vega Style</span>
            </div>
          </header>
          <div class="flow">
            <div class="progress"></div>
            <article class="card"><svg class="card-ico" width="56" height="56"><use href="#p-globe" /></svg><div><h4>Globe</h4><p>globe.badge.chevron.backward</p></div></article>
            <article class="card"><svg class="card-ico" width="56" height="56"><use href="#p-hex" /></svg><div><h4>Circle</h4><p>circle.hexagongrid.fill</p></div></article>
            <article class="card"><svg class="card-ico" width="56" height="56"><use href="#p-trash" /></svg><div><h4>Trash</h4><p>trash.circle</p></div></article>
            <article class="card"><svg class="card-ico" width="56" height="56"><use href="#p-folder" /></svg><div><h4>Folder</h4><p>folder.badge.plus</p></div></article>
            <article class="card"><svg class="card-ico" width="56" height="56"><use href="#p-plane" /></svg><div><h4>Paperplane</h4><p>paperplane</p></div></article>
            <article class="card"><svg class="card-ico" width="56" height="56"><use href="#p-tray" /></svg><div><h4>Tray</h4><p>tray.full</p></div></article>
            <article class="card"><svg class="card-ico" width="56" height="56"><use href="#p-mic" /></svg><div><h4>Mic</h4><p>mic.slash.circle.fill</p></div></article>
            <article class="card"><svg class="card-ico" width="56" height="56"><use href="#p-sun" /></svg><div><h4>Sun</h4><p>sun.dust.fill</p></div></article>
          </div>
          <i class="home-bar"></i>
        </div>
      </div>
    </div>

    <p class="caption"><span class="caption-mono">Cell <span class="ko">이</span> <span class="ko">잠기는</span> <span class="ko">기준선</span> <span class="ko">근처에</span></span> 오면 transform의 scale 값이 변하고 alpha 가 1.0에서부터 줄어든다.</p>

    <!-- hand drawn notes over the screenshot -->
    <svg class="marks" width="2752" height="1870" viewBox="0 0 2752 1870">
      <g fill="none" stroke="#ff45f6" stroke-width="8" stroke-linejoin="round">
        <path d="M1044 88V140" stroke-linecap="round" />
        <path d="M455 896V140H1226V755" />
        <rect x="160" y="954" width="378" height="50" rx="2" stroke-width="10" />
      </g>
      <polygon points="439,895 470,895 454.500,937" fill="#ff45f6" />
      <polygon points="1210,754 1241,754 1226,796" fill="#ff45f6" />

      <rect x="1430" y="1141" width="550" height="75" rx="2" fill="none" stroke="#0f35f5" stroke-width="10" />
      <path d="M1313 1770L1518 1325" stroke="#0f35f5" stroke-width="7" stroke-linecap="round" />
      <polygon points="1534,1289 1502,1318 1531,1333" fill="#0f35f5" />
      <path d="M1201 1866L1516 1864" stroke="#0f35f5" stroke-width="7" stroke-linecap="round" />
      <path d="M1709 1866L1962 1864" stroke="#000" stroke-width="7" stroke-linecap="round" />
    </svg>
  </body>
</html>
```

FILE: styles.css
```css
* {
  margin: 0;
  padding: 0;
  box-sizing: border-box;
}

body {
  position: relative;
  width: 2752px;
  height: 1870px;
  overflow: hidden;
  background-color: #fff;
  font-family: "Inter", "Noto Sans CJK KR", sans-serif;
  color: #333;
}

svg {
  display: block;
  flex: none;
}

i {
  display: block;
}

.defs {
  position: absolute;
  width: 0;
  height: 0;
}

.ico {
  fill: none;
  stroke: #6e6e6e;
  stroke-width: 1.8;
}

.heading {
  height: 187px;
  padding: 10px 0 0 874px;
  font-family: "DejaVu Sans Mono", "Noto Sans CJK KR", monospace;
  font-size: 41px;
  font-weight: 400;
  line-height: 54px;
  color: #000;
}

.heading-ko {
  font-size: 41px;
}

.stage {
  display: flex;
  height: 1510px;
}

.xcode {
  display: flex;
  width: 2000px;
  border-top: 2px solid #d7d5d6;
  border-radius: 0 0 18px 18px;
  overflow: hidden;
}

/* navigator */
.nav-pane {
  display: flex;
  flex-direction: column;
  width: 543px;
  background-color: #e6e1e3;
  font-size: 26.3px;
  color: #444;
}

.nav-tabs {
  display: flex;
  align-items: center;
  gap: 23px;
  height: 59px;
  padding-left: 55px;
  border-bottom: 2px solid #d0cccd;
  flex: none;
}

.tab-spray {
  margin-right: -5px;
}

.process {
  display: flex;
  align-items: center;
  height: 46px;
  margin-top: 21px;
  padding-left: 29px;
  flex: none;
}

.process .chev-d {
  margin-left: 0;
  margin-right: 4px;
}

.process-name {
  margin-left: 14px;
  width: 326px;
  white-space: nowrap;
  color: #777;
}

.process-name b {
  color: #2f2f2f;
  font-weight: 700;
}

.gauge {
  margin-left: -6px;
}

.stack-ico {
  margin-left: 24px;
}

.metric {
  flex: none;
  position: relative;
  height: 69px;
  margin-left: 37px;
  margin-right: 31px;
  border-bottom: 2px solid #d0cccd;
}

.metric-first {
  height: 67px;
}

.metric-last {
  height: 68px;
}

.metric-row {
  display: grid;
  grid-template-columns: 31px auto 1fr;
  column-gap: 12px;
  align-items: center;
  height: 54px;
  padding: 0 11px 3px 20px;
  color: #5c585a;
}

.metric-first .metric-row {
  height: 50px;
}

.metric-row .ico {
  stroke: #807c7e;
}

.metric-val {
  text-align: right;
}

.spark {
  margin-left: -37px;
  overflow: visible;
  fill: #0f6fe8;
}

.focused {
  display: flex;
  align-items: center;
  justify-content: space-between;
  height: 46px;
  padding: 4px 40px 0 25px;
  border-bottom: 2px solid #d0cccd;
  color: #3a3a3a;
  flex: none;
}

.tree {
  list-style: none;
  padding-top: 2px;
  flex: none;
}

.tree-row {
  display: flex;
  align-items: center;
  height: 45.82px;
  margin: 0 24px 0 21px;
  padding-right: 12px;
  white-space: nowrap;
  border-radius: 8px;
}

.chev {
  width: 24px;
  padding-right: 13px;
}

.chev-d {
  width: 24px;
  padding-right: 7px;
  margin-left: -5px;
  margin-right: 5px;
}

.node {
  margin-right: 13px;
}

.lv0 {
  padding-left: 42px;
}

.lv1 {
  padding-left: 72px;
}

.lv1 .node {
  margin-right: 12px;
}

.lv2 {
  padding-left: 101px;
}

.lv2 .node {
  margin-right: 12px;
}

.lv3 {
  padding-left: 130px;
}

.badge {
  margin-left: auto;
}

.selected {
  background-color: #3f93fb;
  color: #fff;
}

.selected .chev use {
  filter: brightness(4);
}

.filter {
  display: flex;
  align-items: center;
  height: 45px;
  margin: auto 14px 7px 12px;
  padding: 0 12px 0 7px;
  background-color: #fff;
  border: 1px solid #c0bebf;
  border-radius: 10px;
  font-size: 23px;
  color: #bbb;
  flex: none;
}

.filter-hint {
  margin-left: 9px;
}

.filter-mode {
  margin-left: auto;
}

/* canvas */
.canvas-pane {
  display: flex;
  flex-direction: column;
  width: 731px;
  border-right: 1px solid #dcdcdc;
}

.jump-bar {
  display: flex;
  align-items: center;
  height: 58px;
  padding-left: 19px;
  background-color: #fff;
  border-bottom: 2px solid #e3e3e3;
  flex: none;
}

.bar-sep {
  width: 1px;
  height: 32px;
  margin: 0 18px 0 20px;
  background-color: #dedede;
}

.bar-sep-end {
  margin: 0 22px 0 18px;
}

.fwd {
  margin-left: 24px;
}

.crumbs {
  display: flex;
  align-items: center;
  gap: 12.8px;
  margin-left: 25px;
}

.lines {
  margin-left: 31px;
}

.canvas {
  height: 1333px;
  background-color: #f1f1f1;
  overflow: hidden;
  flex: none;
}

.wire {
  fill: none;
  stroke: #bbb;
  stroke-width: 1.5;
}

.sheet {
  fill: #fff;
  stroke: #c4c4c4;
  stroke-width: 1.5;
}

.thin {
  fill: #f6f6f6;
}

.picked {
  fill: rgba(70, 90, 215, 0.36);
  stroke: #2f80ea;
  stroke-width: 2;
}

.row3d text {
  font-size: 16px;
  fill: #222;
}

.row3d .sub {
  font-size: 12px;
  fill: #777;
}

.tag {
  fill: #fff;
  stroke: #aaa;
  stroke-width: 1.4;
}

.tiny {
  font-size: 8px;
  fill: #666;
}

.big {
  font-size: 10px;
  fill: #333;
}

.debug-bar {
  display: grid;
  align-items: center;
  justify-items: start;
  background-color: #fff;
  flex: none;
}

.debug-top {
  grid-template-columns: 98px 57px 53px 57px 95px 94px 38px 154px;
  height: 59px;
  padding-left: 41px;
  border-bottom: 2px solid #e6e6e6;
}

.debug-low {
  grid-template-columns: 47px 17px 65px 63px 65px 43px 20px 60px 65px 61px 45px 21px 35px 20px 26px 27px;
  height: 56px;
  padding-left: 24px;
}

.zoom-knob {
  position: relative;
  display: flex;
  align-items: center;
  width: 53px;
}

.zoom-dot {
  width: 12px;
  height: 11px;
  border-radius: 6px;
  background-color: #0f7af0;
}

.zoom-circle {
  width: 45px;
  height: 45px;
  margin-left: -4px;
  background-color: #fff;
  border: 1.5px solid #cfcfcf;
  border-radius: 50%;
}

.depth {
  display: flex;
  align-items: center;
  width: 154px;
}

.depth-handle {
  width: 23px;
  height: 36px;
  background-color: #fff;
  border: 1.5px solid #d2d2d2;
  border-radius: 5px;
}

.depth-fill {
  width: 108px;
  height: 9px;
  background-color: #0f7af0;
}

.low-sep {
  width: 1px;
  height: 28px;
  background-color: #dedede;
}

/* inspector */
.inspector {
  display: flex;
  flex-direction: column;
  flex: 1;
  background-color: #f4eff1;
  font-size: 23.2px;
  color: #333;
}

.insp-tabs {
  display: flex;
  align-items: center;
  justify-content: center;
  gap: 37px;
  height: 58px;
  border-bottom: 2px solid #dedcdd;
  flex: none;
}

.group {
  margin: 0 17px 0 18px;
  border-bottom: 2px solid #dcd9da;
  flex: none;
}

.row {
  display: grid;
  grid-template-columns: 149px 1fr;
  column-gap: 13px;
  height: 37.4px;
  line-height: 37.4px;
  white-space: nowrap;
}

.key {
  font-size: 21.5px;
  text-align: right;
  color: #555;
}

.pair {
  display: grid;
  grid-template-columns: 115px 1fr;
}

.sect {
  height: 37.4px;
  padding-left: 13px;
  font-size: 22px;
  font-weight: 600;
  line-height: 37.4px;
  color: #333;
}

.group-a {
  height: 156px;
  padding-top: 1px;
}

.group-b {
  height: 90px;
  padding-top: 6px;
}

.group-c {
  height: 199px;
  padding-top: 8px;
}

.group-d {
  height: 388px;
}

.tight {
  height: auto;
  line-height: 29.3px;
}

.group-e {
  height: 239px;
  padding-top: 10px;
}

.faded {
  padding-left: 0;
  margin-left: -2px;
  font-size: 25px;
  font-weight: 700;
  color: #858284;
}

.group-f {
  height: 264px;
  padding-top: 10px;
}

.group-f .row {
  margin-top: 17px;
}

.group-g {
  border-bottom: 0;
  padding-top: 10px;
}

.malloc {
  margin-top: 9px;
  text-align: center;
  line-height: 37px;
  color: #adaaac;
}

/* phone */
.phone {
  position: relative;
  width: 714px;
  height: 1466px;
  margin: 6px 0 0 20px;
  padding: 28px 28px 25px 27px;
  background-color: #000;
  border: 5px solid #303030;
  border-radius: 122px;
}

.hw {
  position: absolute;
  background-color: #333;
}

.hw-a {
  top: 230px;
  left: -15px;
  width: 10px;
  height: 49px;
  border-radius: 2px 0 0 2px;
}

.hw-b {
  top: 337px;
  left: -15px;
  width: 10px;
  height: 117px;
  border-radius: 2px 0 0 2px;
}

.hw-c {
  top: 476px;
  left: -15px;
  width: 10px;
  height: 117px;
  border-radius: 2px 0 0 2px;
}

.hw-d {
  top: 376px;
  right: -11px;
  width: 6px;
  height: 190px;
  border-radius: 0 2px 2px 0;
}

.screen {
  position: relative;
  height: 100%;
  overflow: hidden;
  background-color: #fff;
  border-radius: 88px;
}

.notch {
  position: absolute;
  top: 0;
  left: 190px;
  width: 269px;
  height: 54px;
  background-color: #000;
  border-radius: 0 0 34px 34px;
}

.app-bar {
  height: 150px;
  background-color: #05c7bd;
  border-bottom: 2px solid #8ee9e3;
}

.status {
  display: flex;
  align-items: center;
  justify-content: space-between;
  height: 80px;
  padding: 0 31px 0 58px;
}

.time {
  font-size: 26px;
  font-weight: 600;
  color: #000;
}

.status-icons {
  display: flex;
  align-items: center;
  gap: 10px;
}

.signal {
  width: 29px;
  height: 4px;
  margin-top: 16px;
  background: repeating-linear-gradient(90deg, #6fa5a2 0 5px, transparent 5px 8px);
}

.title-bar {
  display: flex;
  align-items: center;
  height: 62px;
  padding-left: 15px;
}

.back {
  margin-left: 14px;
  font-family: "Lato", sans-serif;
  font-size: 27px;
  color: #0a84ff;
}

.title {
  margin-left: 19px;
  font-family: "Lato", sans-serif;
  font-size: 32px;
  font-weight: 700;
  color: #fff;
}

.flow {
  display: flex;
  flex-direction: column;
  gap: 33.3px;
  padding: 19px 33px 0;
}

.progress {
  height: 8px;
  margin-bottom: -13px;
  background-color: #35aec8;
  border-radius: 4px;
}

.card {
  display: flex;
  align-items: center;
  height: 108px;
  padding-left: 19px;
  background-color: #fff;
  border-radius: 24px;
  box-shadow: 0 12px 28px rgba(0, 0, 0, 0.16);
}

.card-ico {
  margin-right: 18px;
}

.card h4 {
  margin-bottom: 2px;
  font-size: 27px;
  font-weight: 400;
  line-height: 35px;
  color: #000;
}

.card p {
  font-size: 19.6px;
  font-style: italic;
  line-height: 28px;
  color: #666;
}

.home-bar {
  position: absolute;
  left: 209px;
  bottom: 12px;
  width: 231px;
  height: 9px;
  background: linear-gradient(90deg, #666, #888);
  border-radius: 5px;
}

/* notes */
.caption {
  padding: 86px 0 0 553px;
  font-size: 38px;
  line-height: 50px;
  white-space: nowrap;
  color: #000;
}

.caption-mono {
  font-family: "DejaVu Sans Mono", "Noto Sans CJK KR", monospace;
  font-size: 40px;
  word-spacing: 2px;
}

.ko {
  font-size: 39px;
}

.marks {
  position: absolute;
  top: 0;
  left: 0;
  pointer-events: none;
}
```
